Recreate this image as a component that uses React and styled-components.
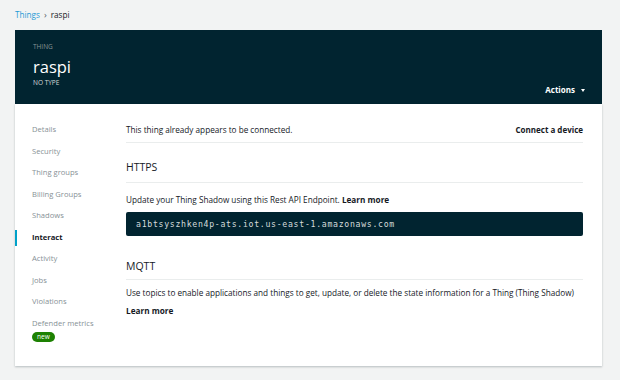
import React from "react";
import styled, { createGlobalStyle } from "styled-components";

const GlobalStyle = createGlobalStyle`
  body {
    margin: 0;
    background: #f2f3f3;
    font-family: "Open Sans", "Noto Sans", sans-serif;
    color: #16191f;
  }
`;

const Page = styled.div`
  padding: 0 18px 0 15px;
  width: 620px;
  height: 380px;
  box-sizing: border-box;
  overflow: hidden;
`;

const Breadcrumb = styled.div`
  height: 30px;
  display: flex;
  align-items: center;
  gap: 4px;
  font-size: 8.2px;
  padding-bottom: 2px;
  box-sizing: border-box;
  color: #16191f;

  a {
    color: #1e9ad6;
    text-decoration: none;
  }
`;

const Chevron = styled.span`
  color: #545b64;
  font-size: 9px;
`;

const Header = styled.header`
  background: #012430;
  height: 74px;
  padding: 12px 17px 9px 18px;
  box-sizing: border-box;
  display: flex;
  justify-content: space-between;
  align-items: flex-end;
  color: #fff;
`;

const TitleBlock = styled.div`
  display: flex;
  flex-direction: column;
  align-self: flex-start;
`;

const Eyebrow = styled.div`
  font-size: 6.5px;
  line-height: 10px;
  color: ${(p) => (p.light ? "#d5dbdb" : "#879596")};
  margin-top: ${(p) => p.mt || 0}px;
`;

const Title = styled.h1`
  margin: 5px 0 0;
  font-size: 16.5px;
  font-weight: 400;
  line-height: 20px;
`;

const Actions = styled.button`
  background: none;
  border: 0;
  padding: 0;
  color: #fff;
  font: inherit;
  font-size: 8px;
  font-weight: 700;
  line-height: 10px;
  display: flex;
  align-items: center;
  gap: 6px;

  &::after {
    content: "";
    border-left: 2.5px solid transparent;
    border-right: 2.5px solid transparent;
    border-top: 3px solid #fff;
  }
`;

const Card = styled.div`
  background: #fff;
  display: flex;
  height: 262px;
  box-shadow: 0 1px 2px rgba(0, 28, 36, 0.25);
`;

const Sidebar = styled.nav`
  width: 111px;
  flex-shrink: 0;
  padding-top: 15px;
  box-sizing: border-box;
`;

const NavItem = styled.div`
  position: relative;
  height: 21.5px;
  line-height: 21.5px;
  padding-left: 17px;
  font-size: 7.6px;
  color: ${(p) => (p.active ? "#16191f" : "#879196")};
  font-weight: ${(p) => (p.active ? 700 : 400)};

  ${(p) =>
    p.active &&
    `
    &::before {
      content: "";
      position: absolute;
      left: 0;
      top: 3px;
      width: 2px;
      height: 16px;
      background: #00a1c9;
    }
  `}
`;

const Badge = styled.span`
  display: block;
  width: fit-content;
  margin-left: 17px;
  margin-top: -2px;
  height: 10px;
  line-height: 10px;
  padding: 0 5px;
  border-radius: 6px;
  background: #1d8102;
  color: #fff;
  font-size: 6.5px;
`;

const Content = styled.main`
  flex: 1;
  padding: 19px 19px 0 0;
`;

const TopRow = styled.div`
  display: flex;
  justify-content: space-between;
  align-items: center;
  height: 12px;
  padding-bottom: 7px;
  border-bottom: 1px solid #eaeded;
  font-size: 8.2px;
`;

const Link = styled.a`
  font-weight: 700;
  color: #16191f;
  font-size: ${(p) => p.size || 8.2}px;
`;

const SectionTitle = styled.h2`
  margin: ${(p) => p.mt}px 0 0;
  font-size: 10.5px;
  font-weight: 500;
  line-height: 14px;
  padding-bottom: ${(p) => p.pb}px;
  border-bottom: 1px solid #eaeded;
  color: #16191f;
`;

const Text = styled.p`
  margin: ${(p) => p.mt}px 0 0;
  font-size: 8.2px;
  line-height: 12px;
`;

const CodeBox = styled.div`
  margin-top: 6px;
  height: 24px;
  background: #012430;
  border-radius: 2px;
  display: flex;
  align-items: center;
  padding-left: 10px;
  font-family: "DejaVu Sans Mono", monospace;
  font-size: 8.2px;
  letter-spacing: 0.7px;
  color: #d5dbdb;
`;

const navItems = [
  "Details",
  "Security",
  "Thing groups",
  "Billing Groups",
  "Shadows",
  "Interact",
  "Activity",
  "Jobs",
  "Violations",
  "Defender metrics",
];

export default function App() {
  return (
    <Page>
      <GlobalStyle />
      <Breadcrumb>
        <a href="#">Things</a>
        <Chevron>&#x203A;</Chevron>
        <span>raspi</span>
      </Breadcrumb>
      <Header>
        <TitleBlock>
          <Eyebrow>THING</Eyebrow>
          <Title>raspi</Title>
          <Eyebrow light mt={1}>NO TYPE</Eyebrow>
        </TitleBlock>
        <Actions>Actions</Actions>
      </Header>
      <Card>
        <Sidebar>
          {navItems.map((item) => (
            <NavItem key={item} active={item === "Interact"}>
              {item}
            </NavItem>
          ))}
          <Badge>new</Badge>
        </Sidebar>
        <Content>
          <TopRow>
            <span>This thing already appears to be connected.</span>
            <Link size={8}>Connect a device</Link>
          </TopRow>
          <SectionTitle mt={17} pb={8}>HTTPS</SectionTitle>
          <Text mt={11}>
            Update your Thing Shadow using this Rest API Endpoint.{" "}
            <Link>Learn more</Link>
          </Text>
          <CodeBox>a1btsyszhken4p-ats.iot.us-east-1.amazonaws.com</CodeBox>
          <SectionTitle mt={23} pb={6}>MQTT</SectionTitle>
          <Text mt={7}>
            Use topics to enable applications and things to get, update, or
            delete the state information for a Thing (Thing Shadow)
          </Text>
          <Text mt={6}>
            <Link>Learn more</Link>
          </Text>
        </Content>
      </Card>
    </Page>
  );
}
